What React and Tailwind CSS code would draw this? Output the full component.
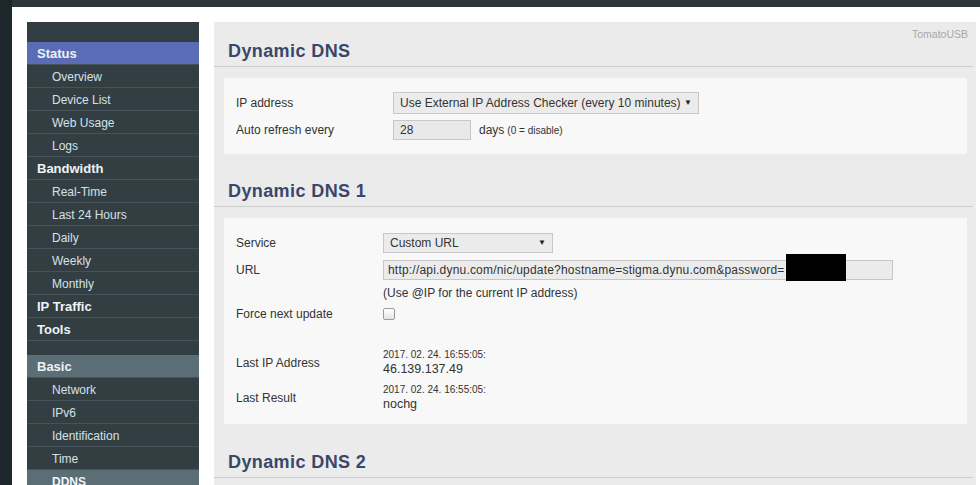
import React from 'react'

const NAV = [
  { label: 'Status', head: true, tone: 'blue' },
  { label: 'Overview' },
  { label: 'Device List' },
  { label: 'Web Usage' },
  { label: 'Logs' },
  { label: 'Bandwidth', head: true },
  { label: 'Real-Time' },
  { label: 'Last 24 Hours' },
  { label: 'Daily' },
  { label: 'Weekly' },
  { label: 'Monthly' },
  { label: 'IP Traffic', head: true },
  { label: 'Tools', head: true },
  { spacer: true },
  { label: 'Basic', head: true, tone: 'slate' },
  { label: 'Network' },
  { label: 'IPv6' },
  { label: 'Identification' },
  { label: 'Time' },
  { label: 'DDNS', tone: 'slate', active: true },
]

function NavRow({ item }) {
  if (item.spacer) return <div className="h-[14px]" />
  const bg =
    item.tone === 'blue' ? 'bg-[#5a6cb6]' : item.tone === 'slate' ? 'bg-[#5b6e76]' : ''
  const text = item.head
    ? 'pl-[10px] text-[13px] font-bold text-[#eef3f7]'
    : item.active
      ? 'pl-[25px] text-[12px] font-bold text-[#f2f6f9]'
      : 'pl-[25px] text-[12px] text-[#d3e1ea]'
  return (
    <div className={`flex h-[23px] items-center border-b border-[#46525a] pt-[1px] ${bg} ${text}`}>
      {item.label}
    </div>
  )
}

function Heading({ children, top }) {
  return (
    <div
      className={`mr-[3px] border-b border-[#cdcdcd] pb-[4px] pl-[14px] text-[18px] font-bold leading-[22px] tracking-[0.4px] text-[#39476a] ${top}`}
    >
      {children}
    </div>
  )
}

function Select({ width, height, children }) {
  return (
    <div
      className={`flex items-center justify-between border border-[#c8c8c8] bg-[#ebebeb] pl-[6px] pr-[6px] text-[12px] text-[#333] ${width} ${height}`}
    >
      <span>{children}</span>
      <span className="text-[8px] text-[#222]">▼</span>
    </div>
  )
}

export default function App() {
  return (
    <div className="flex h-[485px] w-[980px] overflow-hidden bg-[#1d262a] font-['Liberation_Sans',Arial,sans-serif]">
      <div className="w-[12px] shrink-0" />
      <div className="flex flex-1 flex-col">
        <div className="h-[7px] shrink-0 bg-[#2c363b]" />
        <div className="flex flex-1 gap-[15px] bg-white pl-[15px] pt-[15px]">
          {/* Menu */}
          <nav className="w-[172px] shrink-0 bg-[#333e43] pt-[20px]">
            {NAV.map((item, i) => (
              <NavRow key={i} item={item} />
            ))}
          </nav>

          {/* Contenu */}
          <main className="relative w-[762px] shrink-0 bg-[#ebebeb] text-[#333]">
            <div className="absolute right-[8px] top-[5px] text-[10.5px] text-[#a8a8a8]">TomatoUSB</div>

            <Heading top="pt-[18px]">Dynamic DNS</Heading>
            <div className="ml-[10px] mr-[9px] mt-[11px] bg-[#f8f8f8] px-[12px] pb-[14px] pt-[14px]">
              <div className="flex h-[22px] items-center">
                <div className="w-[157px] text-[12px]">IP address</div>
                <Select width="w-[306px]" height="h-[22px]">
                  Use External IP Address Checker (every 10 minutes)
                </Select>
              </div>
              <div className="mt-[6px] flex h-[20px] items-center">
                <div className="w-[157px] text-[12px]">Auto refresh every</div>
                <div className="flex h-[20px] w-[78px] items-center border border-[#c8c8c8] bg-[#e9e9e9] px-[6px] text-[12px]">
                  28
                </div>
                <span className="ml-[8px] text-[12px]">days</span>
                <span className="ml-[3px] text-[10px]">(0 = disable)</span>
              </div>
            </div>

            <Heading top="pt-[26px]">Dynamic DNS 1</Heading>
            <div className="ml-[10px] mr-[9px] mt-[11px] bg-[#f8f8f8] px-[12px] pb-[12px] pt-[15px]">
              <div className="flex h-[20px] items-center">
                <div className="w-[147px] text-[12px]">Service</div>
                <Select width="w-[170px]" height="h-[20px]">Custom URL</Select>
              </div>
              <div className="mt-[7px] flex h-[20px] items-center">
                <div className="w-[147px] text-[12px]">URL</div>
                <div className="relative flex h-[20px] w-[510px] items-center border border-[#c6c6c6] bg-[#ebebeb] pl-[4px] text-[12px] tracking-[0.2px]">
                  http://api.dynu.com/nic/update?hostname=stigma.dynu.com&amp;password=
                  <div className="absolute left-[402px] top-[-7px] h-[27px] w-[60px] bg-black" />
                </div>
              </div>
              <div className="ml-[147px] mt-[5px] h-[16px] text-[12px] leading-[16px]">
                (Use @IP for the current IP address)
              </div>
              <div className="mt-[4px] flex h-[18px] items-center">
                <div className="w-[147px] text-[12px]">Force next update</div>
                <div className="h-[12px] w-[12px] rounded-[2px] border border-[#9a9a9a] bg-gradient-to-b from-white to-[#e4e4e4]" />
              </div>

              <div className="mt-[26px] flex items-center">
                <div className="w-[147px] text-[12px]">Last IP Address</div>
                <div>
                  <div className="text-[10px] leading-[12px]">2017. 02. 24. 16:55:05:</div>
                  <div className="text-[12.5px] leading-[16px]">46.139.137.49</div>
                </div>
              </div>
              <div className="mt-[7px] flex items-center">
                <div className="w-[147px] text-[12px]">Last Result</div>
                <div>
                  <div className="text-[10px] leading-[12px]">2017. 02. 24. 16:55:05:</div>
                  <div className="text-[12.5px] leading-[16px]">nochg</div>
                </div>
              </div>
            </div>

            <Heading top="pt-[27px]">Dynamic DNS 2</Heading>
          </main>
        </div>
      </div>
    </div>
  )
}
